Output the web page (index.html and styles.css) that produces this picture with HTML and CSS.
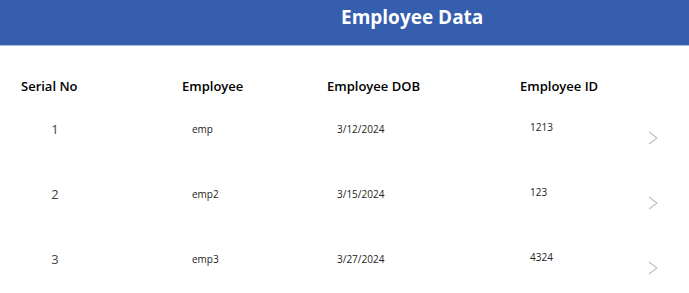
FILE: index.html
```html
<!DOCTYPE html>
<html lang="en">
<head>
  <meta charset="UTF-8">
  <title>Employee Data</title>
  <link rel="stylesheet" href="styles.css">
</head>
<body>

  <header class="title-bar">
    <h1>Employee Data</h1>
  </header>

  <div class="table">
    <div class="row head">
      <div>Serial No</div>
      <div>Employee</div>
      <div>Employee DOB</div>
      <div>Employee ID</div>
      <div></div>
    </div>

    <div class="row item">
      <div class="serial">1</div>
      <div class="cell">emp</div>
      <div class="cell dob">3/12/2024</div>
      <div class="cell id">1213</div>
      <div class="next">
        <svg width="12" height="14" viewBox="0 0 12 14"><polyline points="2,1 10,7 2,13" /></svg>
      </div>
    </div>

    <div class="row item">
      <div class="serial">2</div>
      <div class="cell">emp2</div>
      <div class="cell dob">3/15/2024</div>
      <div class="cell id">123</div>
      <div class="next">
        <svg width="12" height="14" viewBox="0 0 12 14"><polyline points="2,1 10,7 2,13" /></svg>
      </div>
    </div>

    <div class="row item">
      <div class="serial">3</div>
      <div class="cell">emp3</div>
      <div class="cell dob">3/27/2024</div>
      <div class="cell id">4324</div>
      <div class="next">
        <svg width="12" height="14" viewBox="0 0 12 14"><polyline points="2,1 10,7 2,13" /></svg>
      </div>
    </div>
  </div>

</body>
</html>
```

FILE: styles.css
```css
body {
  margin: 0;
  font-family: "Open Sans", "Noto Sans", Arial, sans-serif;
  background: #fff;
  color: #222;
}

.title-bar {
  height: 46px;
  background: #355eae;
  border-bottom: 1px solid #a9bde2;
  box-sizing: border-box;
}

.title-bar h1 {
  margin: 0;
  padding-left: 341px;
  font-size: 19px;
  font-weight: 700;
  line-height: 34px;
  color: #fff;
}

.table {
  padding-left: 21px;
}

.row {
  display: grid;
  grid-template-columns: 161px 145px 193px 120px 1fr;
}

.head {
  padding-top: 31px;
  height: 50px;
  box-sizing: border-box;
  font-size: 13px;
  font-weight: 600;
  line-height: 18px;
  color: #000;
}

.item {
  height: 65px;
  align-items: center;
}

.serial {
  width: 68px;
  text-align: center;
  font-size: 13px;
  color: #444;
}

.cell {
  padding-left: 10px;
  font-size: 10px;
  color: #222;
}

.dob {
  margin-top: 1px;
}

.id {
  margin-top: -3px;
}

.next {
  padding-left: 7px;
  padding-top: 18px;
}

.next svg {
  display: block;
}

.next polyline {
  fill: none;
  stroke: #c4c4c4;
  stroke-width: 1.3;
}
```
